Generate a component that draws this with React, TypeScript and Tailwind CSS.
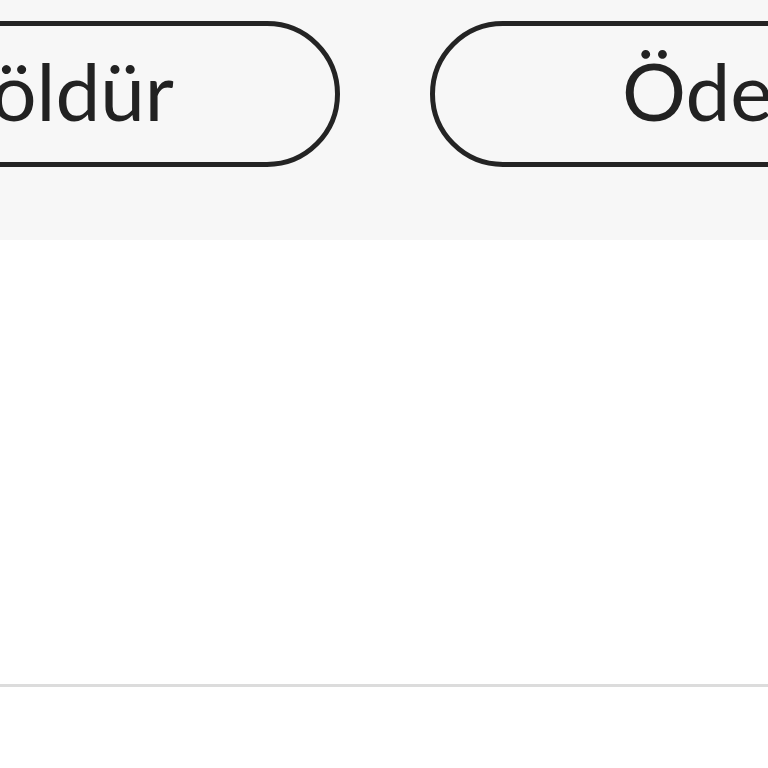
import React from 'react';

// Zoomed-in footer of a payment sheet: two outlined pill actions over a light bar
const PillButton: React.FC<{ label: string; className?: string; align: 'start' | 'end' }> = ({
  label,
  className = '',
  align,
}) => (
  <button
    type="button"
    className={`flex h-[146px] w-[560px] shrink-0 items-center rounded-full border-[5px] border-[#242424] bg-transparent text-[80px] leading-none text-[#222222] ${
      align === 'end' ? 'justify-end pr-[161px]' : 'justify-start pl-[187px]'
    } ${className}`}
  >
    <span className="pb-[8px]">{label}</span>
  </button>
);

const App: React.FC = () => {
  return (
    <div className="h-[768px] w-[768px] overflow-hidden bg-white" style={{ fontFamily: 'Lato, "Noto Sans", sans-serif' }}>
      <div className="h-[240px] overflow-hidden bg-[#f7f7f7] pt-[21px]">
        <div className="flex gap-[90px]">
          <PillButton label="Böldür" align="end" className="ml-[-220px]" />
          <PillButton label="Öde" align="start" />
        </div>
      </div>
      <div className="h-[447px] border-b-[3px] border-[#dcdcdc] bg-white" />
      <div className="bg-white" />
    </div>
  );
};

export default App;
